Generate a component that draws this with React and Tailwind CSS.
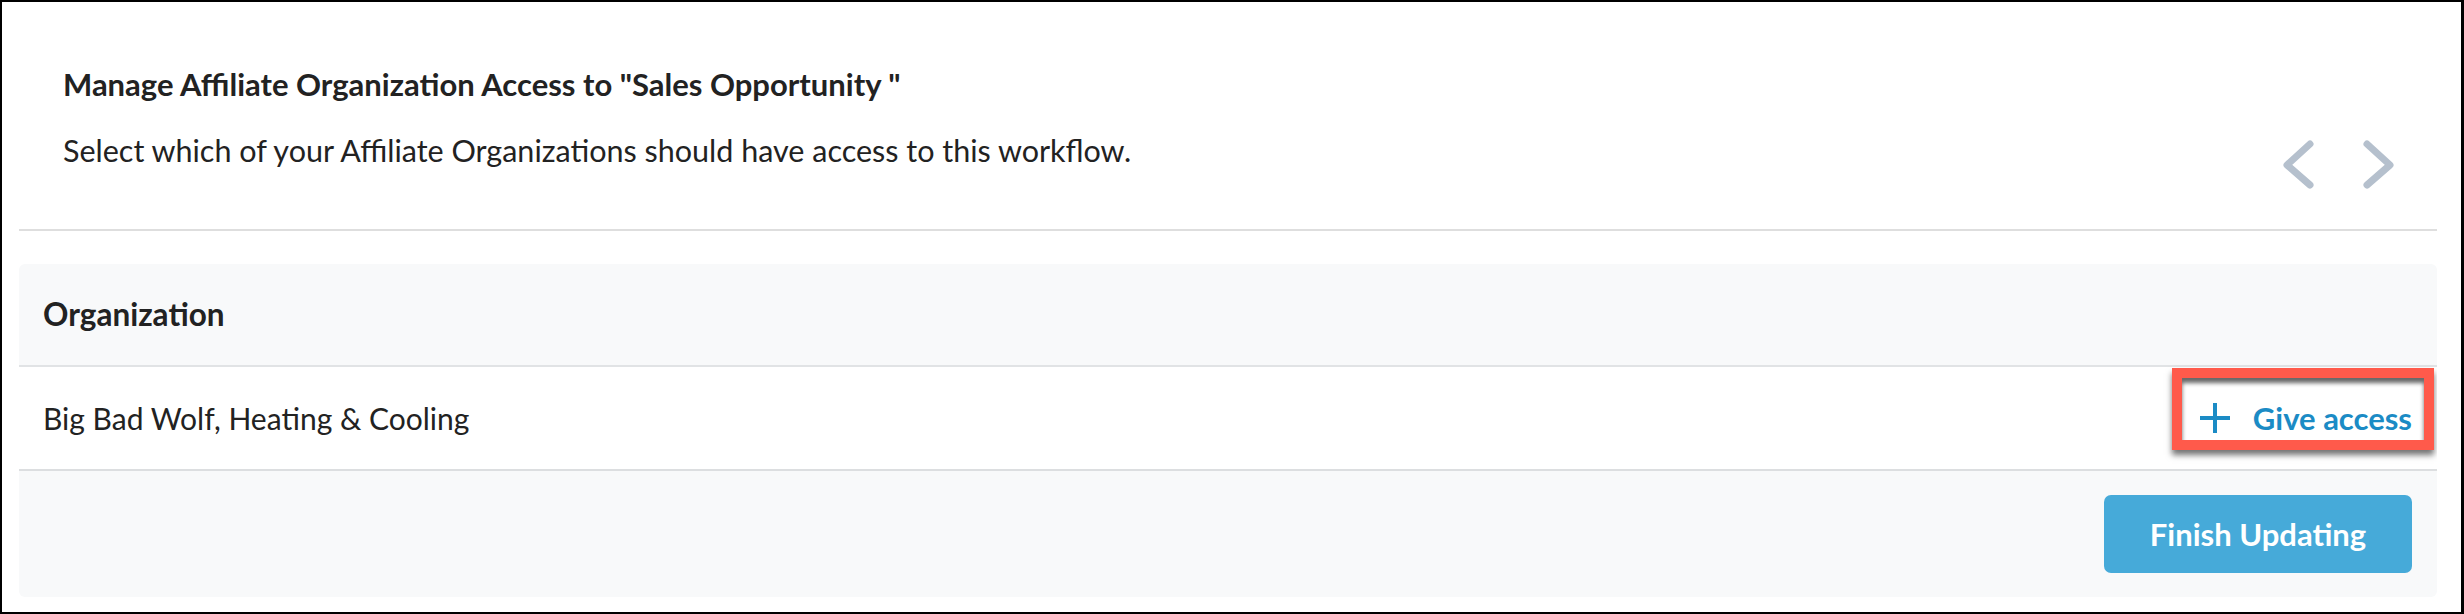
export default function App() {
  return (
    <div
      className="w-[2464px] h-[614px] bg-white border-black border-l-2 border-t-2 border-r-[3px] border-b-2 pl-[17px] pr-[24px] flex flex-col text-[#222]"
      style={{ fontFamily: 'Lato, "Open Sans", sans-serif' }}
    >
      {/* Header */}
      <div className="h-[227px] flex justify-between">
        <div className="pl-[44px] pt-[64px]">
          <h1 className="text-[31px] leading-[1.2] font-bold">
            Manage Affiliate Organization Access to "Sales Opportunity "
          </h1>
          <p className="text-[30.5px] leading-[1.2] mt-[29px]">
            Select which of your Affiliate Organizations should have access to this workflow.
          </p>
        </div>
        <div className="flex gap-[45px] pt-[136px] pr-[42px]">
          <svg width="34" height="54" viewBox="0 0 34 54" className="text-[#b5c0cd]">
            <polyline points="28,6 5,27 28,47" fill="none" stroke="currentColor" strokeWidth="7" strokeLinecap="round" strokeLinejoin="round" />
          </svg>
          <svg width="34" height="54" viewBox="0 0 34 54" className="text-[#b5c0cd]">
            <polyline points="6,6 29,27 6,47" fill="none" stroke="currentColor" strokeWidth="7" strokeLinecap="round" strokeLinejoin="round" />
          </svg>
        </div>
      </div>

      <div className="h-[2px] bg-[#dedede]" />

      {/* Table */}
      <div className="mt-[33px] rounded-[6px] overflow-hidden">
        <div className="h-[101px] bg-[#f8f9fa] flex items-center pl-[24px] border-b-2 border-[#e1e3e5] box-content">
          <span className="text-[31.5px] font-bold">Organization</span>
        </div>
        <div className="relative h-[102px] bg-white flex items-center justify-between pl-[24px] pr-[25px] border-b-2 border-[#dcdee0] box-content">
          <span className="text-[30px]">Big Bad Wolf, Heating &amp; Cooling</span>
          <button className="flex items-center gap-[22px] text-[#1b8bc5] font-bold text-[31px]">
            <svg width="32" height="32" viewBox="0 0 32 32">
              <path d="M16 1v30M1 16h30" stroke="currentColor" strokeWidth="4" />
            </svg>
            Give access
          </button>
          {/* annotation */}
          <div className="absolute right-[3px] top-[1px] w-[262px] h-[82px] border-[10px] border-[#ff5a4b] shadow-[0_5px_6px_rgba(0,0,0,0.55),inset_0_5px_4px_rgba(0,0,0,0.6)] pointer-events-none" />
        </div>
        <div className="h-[126px] bg-[#f8f9fa] flex justify-end items-start pt-[24px] pr-[25px]">
          <button className="w-[308px] h-[78px] rounded-[7px] bg-[#46aad9] text-white font-bold text-[31px]">
            Finish Updating
          </button>
        </div>
      </div>
    </div>
  );
}
